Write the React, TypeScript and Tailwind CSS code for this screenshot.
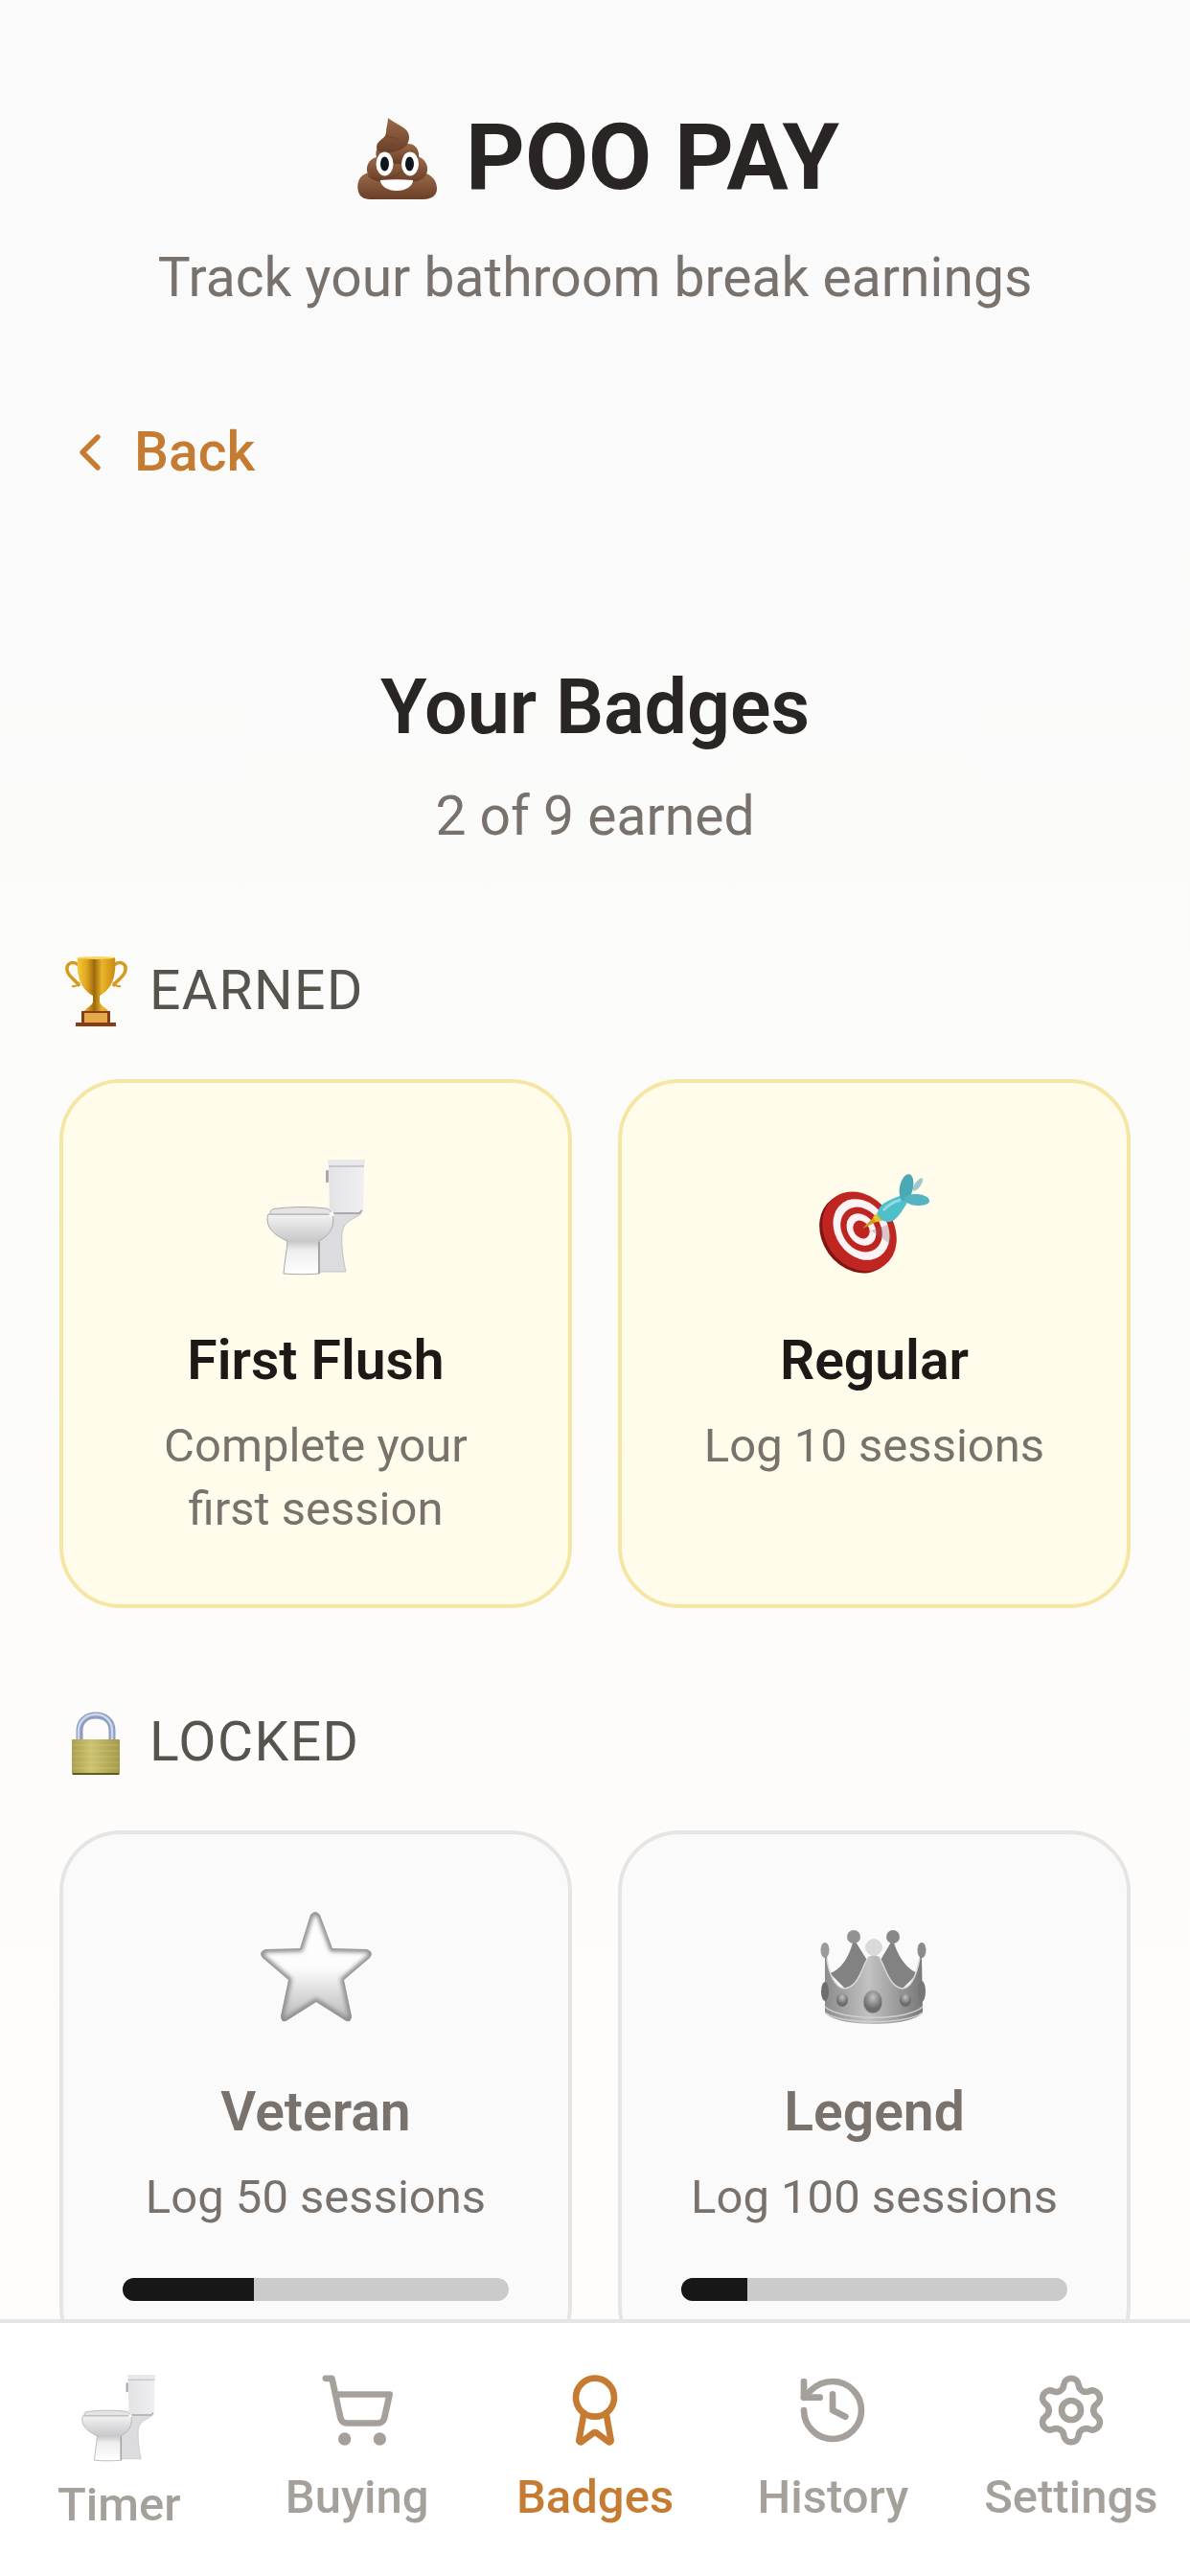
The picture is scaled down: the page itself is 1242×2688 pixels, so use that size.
import React from 'react';
import { Award, ChevronLeft, History, Settings, ShoppingCart } from 'lucide-react';

interface Badge {
  id: string;
  name: string;
  description: string;
  icon: React.ReactNode;
  progress?: number;
}

interface IconProps {
  className?: string;
}

const PooIcon = ({ className }: IconProps) => (
  <svg viewBox="0 0 96 96" className={className} aria-hidden="true">
    <defs>
      <linearGradient id="poo-a" x1="0" y1="0" x2="0" y2="1">
        <stop offset="0" stopColor="#9a6a49" />
        <stop offset="1" stopColor="#6a3f28" />
      </linearGradient>
    </defs>
    <path d="M20 64C8 66 6 76 8 84c2 7 8 8 14 8h54c8 0 14-4 14-11 0-9-6-15-14-17z" fill="url(#poo-a)" />
    <path d="M27 48c-9 2-12 11-9 18 3 7 12 8 20 8h24c10 0 17-4 18-12 1-7-4-13-10-15z" fill="url(#poo-a)" />
    <path d="M35 33c-7 2-10 9-8 15 3 7 12 8 20 7 9 0 22 0 24-7 1-8-4-14-11-14z" fill="url(#poo-a)" />
    <path d="M39 7c0 6-2 9-2 16 0 5-9 7-10 14 0 6 6 7 14 6 10-1 20-5 20-16C61 17 49 15 39 7z" fill="url(#poo-a)" />
    <path d="M37 23c-1 6 8 3 12 6M27 50c12 6 30 3 37-9M18 68c12 6 28 3 40-9" fill="none" stroke="#61391f" strokeOpacity=".45" strokeWidth="1.5" />
    <ellipse cx="35.5" cy="55" rx="9" ry="12.5" fill="#fff" />
    <ellipse cx="62" cy="55" rx="9" ry="12.5" fill="#fff" />
    <ellipse cx="35.5" cy="55" rx="4.5" ry="7.5" fill="#10151b" />
    <ellipse cx="61.5" cy="55" rx="4.5" ry="7.5" fill="#10151b" />
    <path d="M31 72c11-1 23-1 34 0 0 6-7 11-17 11s-17-5-17-11z" fill="#fff" />
  </svg>
);

const TrophyIcon = ({ className }: IconProps) => (
  <svg viewBox="0 0 76 76" className={className} aria-hidden="true">
    <defs>
      <linearGradient id="trophy-a">
        <stop offset="0" stopColor="#f6c93c" />
        <stop offset=".25" stopColor="#dea51f" />
        <stop offset=".45" stopColor="#9c6a0c" />
        <stop offset=".65" stopColor="#e9b52b" />
        <stop offset="1" stopColor="#c98a12" />
      </linearGradient>
    </defs>
    <path d="M20 11c-6-5-13-2-12 5 1 8 8 9 13 17M57 11c6-5 13-2 12 5-1 8-8 9-13 17" fill="none" stroke="#d59a20" strokeWidth="3.5" />
    <path d="M13 33c3 1 6-1 8-4M64 33c-3 1-6-1-8-4" fill="none" stroke="#d59a20" strokeWidth="2" />
    <path d="M19 3h39c2 20-4 34-16 40v6c0 4 5 5 9 10H26c4-5 9-6 9-10v-6C23 37 17 23 19 3z" fill="url(#trophy-a)" />
    <ellipse cx="38.5" cy="3.5" rx="19.5" ry="1.5" fill="#f8d662" />
    <path d="M23 59h30v12h6v4H17v-4h6z" fill="#8a3b12" />
    <path d="M26 61h24v10H26z" fill="#e3a94a" />
  </svg>
);

const LockIcon = ({ className }: IconProps) => (
  <svg viewBox="0 0 76 76" className={className} aria-hidden="true">
    <defs>
      <linearGradient id="lock-a">
        <stop offset="0" stopColor="#a99f4e" />
        <stop offset=".4" stopColor="#ccc272" />
        <stop offset="1" stopColor="#a49a4b" />
      </linearGradient>
    </defs>
    <path d="M21 36V26c0-10 7-16 17-16s17 6 17 16v10" fill="none" stroke="#8d9dbd" strokeWidth="7" />
    <path d="M20 36V26c0-10 8-17 18-17s17 7 17 17v10" fill="none" stroke="#cbd8ef" strokeWidth="2.5" />
    <rect x="13" y="35" width="50" height="37" rx="1" fill="url(#lock-a)" />
    <path d="M13 41h50M13 47h50M13 53h50M13 59h50M13 65h50" stroke="#e0d98e" strokeOpacity=".3" />
    <path d="M14 70h48v2H14z" fill="#5f5a22" />
  </svg>
);

const ToiletIcon = ({ className }: IconProps) => (
  <svg viewBox="0 0 128 128" className={className} aria-hidden="true">
    <defs>
      <linearGradient id="toilet-a">
        <stop offset="0" stopColor="#e3e2e5" />
        <stop offset="1" stopColor="#efeef1" />
      </linearGradient>
      <linearGradient id="toilet-b" x1="0" y1="0" x2="0" y2="1">
        <stop offset="0" stopColor="#f3f3f4" />
        <stop offset=".45" stopColor="#c8c8ca" />
        <stop offset=".6" stopColor="#eeeeef" />
        <stop offset="1" stopColor="#fff" />
      </linearGradient>
    </defs>
    <path d="M78 60h33c-6 6-18 7-20 20-1 14 1 28 4 41H66V84z" fill="#dcdbde" stroke="#c4c3c6" />
    <path d="M77 11h37l-1 46-4 4H78z" fill="url(#toilet-a)" />
    <path d="M78 60h31l3-3" fill="none" stroke="#a9a8ac" strokeWidth="2" />
    <path d="M76 4h39l-1 7H77z" fill="#e9e8eb" />
    <path d="M77 11h37" stroke="#bfbec2" strokeWidth="1.5" />
    <rect x="74" y="15" width="3" height="13" rx="1" fill="#aaa9ad" />
    <path d="M14 61h67c3 13-3 22-14 28v34c-12 1-25 1-37 0 1-12 3-22 4-34C20 83 10 74 14 61z" fill="url(#toilet-b)" stroke="#a9a9ab" />
    <path d="M16 60c0-4 3-5 8-5 16-2 34-2 50 0 3 0 6 3 5 6H16z" fill="#e4e4e5" stroke="#acacae" />
    <circle cx="80" cy="61" r="2.5" fill="#f8f8f8" />
    <path d="M67 90v33" stroke="#98989b" strokeWidth="1.5" />
  </svg>
);

const TargetIcon = ({ className }: IconProps) => (
  <svg viewBox="0 0 128 128" className={className} aria-hidden="true">
    <g transform="translate(45 81) rotate(-35)">
      <ellipse rx="36" ry="44" fill="#7d1512" />
    </g>
    <g transform="translate(48 79) rotate(-35)">
      <ellipse rx="36" ry="44" fill="#bf2622" />
    </g>
    <g transform="translate(50 77) rotate(-35)">
      <ellipse rx="27" ry="34" fill="#fdf3f4" />
      <ellipse rx="20" ry="25" fill="#bd2521" />
      <ellipse rx="14" ry="18" fill="#fdf3f4" />
      <ellipse rx="8" ry="10" fill="#bd2521" />
    </g>
    <path d="M60 78l20 14c2-6 1-14-3-20z" fill="#8b5d66" fillOpacity=".3" />
    <path d="M51 76l15-15 4 6z" fill="#d59a1c" />
    <path d="M62 64l5-5 5 9-7 1z" fill="#e5c52f" />
    <ellipse cx="109" cy="30" rx="3" ry="8" transform="rotate(35 109 30)" fill="#9fc9cc" />
    <path d="M67 59c2-9 10-12 23-17l9 5c-6 10-12 21-20 22-6 0-13-4-12-10z" fill="#4fbfc9" />
    <path d="M73 57c5-6 11-9 18-11" fill="none" stroke="#8fdbe1" strokeWidth="3" />
    <ellipse cx="97" cy="33" rx="7" ry="14" transform="rotate(12 97 33)" fill="#4aa9b5" />
    <ellipse cx="108" cy="46" rx="13" ry="6" transform="rotate(5 108 46)" fill="#55b4bf" />
  </svg>
);

const StarIcon = ({ className }: IconProps) => (
  <svg viewBox="0 0 128 128" className={className} aria-hidden="true">
    <defs>
      <linearGradient id="star-a" x1="0" y1="0" x2="0" y2="1">
        <stop offset="0" stopColor="#fff" />
        <stop offset=".5" stopColor="#fcfcfc" />
        <stop offset=".85" stopColor="#c4c4c4" />
        <stop offset="1" stopColor="#adadad" />
      </linearGradient>
      <filter id="star-b">
        <feGaussianBlur stdDeviation="2" />
      </filter>
      <clipPath id="star-c">
        <path d="M58 8q5-6 10 0l13 35 36 1q8 3 3 9L93 76l8 38q-1 8-7 4L64 99l-30 19q-6 4-7-4l8-38L8 53q-5-6 3-9l36-1z" />
      </clipPath>
    </defs>
    <g clipPath="url(#star-c)">
      <path d="M0 0h128v128H0z" fill="url(#star-a)" />
      <path d="M58 8q5-6 10 0l13 35 36 1q8 3 3 9L93 76l8 38q-1 8-7 4L64 99l-30 19q-6 4-7-4l8-38L8 53q-5-6 3-9l36-1z" fill="none" stroke="#8f8f8f" strokeWidth="7" filter="url(#star-b)" />
    </g>
  </svg>
);

const CrownIcon = ({ className }: IconProps) => (
  <svg viewBox="0 0 128 128" className={className} aria-hidden="true">
    <defs>
      <linearGradient id="crown-a">
        <stop offset="0" stopColor="#8b8b8b" />
        <stop offset=".45" stopColor="#c2c2c2" />
        <stop offset="1" stopColor="#777" />
      </linearGradient>
      <radialGradient id="crown-b" cx=".5" cy=".3">
        <stop offset="0" stopColor="#c2c2c2" />
        <stop offset="1" stopColor="#6c6c6c" />
      </radialGradient>
    </defs>
    <path d="M42 33l15 24-20 32-20-20c14-4 22-22 25-36zM83 33L69 57l20 32 20-20C95 64 86 47 83 33z" fill="#828282" />
    <circle cx="42" cy="31" r="7" fill="#929292" />
    <circle cx="83" cy="31" r="7" fill="#888" />
    <ellipse cx="12" cy="45" rx="4.5" ry="8" fill="#9b9b9b" />
    <ellipse cx="113" cy="45" rx="4.5" ry="8" fill="#8a8a8a" />
    <circle cx="63" cy="42" r="9" fill="#dadada" />
    <path d="M12 52h2c2 17 9 32 19 33 14-2 17-21 24-33q6-3 12 0c7 12 10 31 24 33 10-1 15-16 18-33h2l1 58c-12 16-90 16-102 0z" fill="url(#crown-a)" />
    <path d="M14 54c2 16 9 31 19 31 14-2 17-21 24-32M69 53c7 12 10 30 24 32 10-1 15-16 18-32" fill="none" stroke="#d8d8d8" strokeWidth="1.5" />
    <path d="M12 104c16 15 86 15 102 0M12 110c16 13 86 13 102 0" fill="none" stroke="#cfcfcf" strokeWidth="1.5" />
    <ellipse cx="12" cy="88" rx="4" ry="10" fill="#6e6e6e" />
    <ellipse cx="113" cy="88" rx="4" ry="11" fill="#777" />
    <ellipse cx="30" cy="97" rx="6" ry="7" fill="url(#crown-b)" />
    <ellipse cx="96" cy="97" rx="6" ry="7" fill="url(#crown-b)" />
    <ellipse cx="62" cy="99" rx="10" ry="12" fill="url(#crown-b)" stroke="#a9a9a9" />
  </svg>
);

const earnedBadges: Badge[] = [
  {
    id: 'first-flush',
    name: 'First Flush',
    description: 'Complete your first session',
    icon: <ToiletIcon className="size-32" />,
  },
  {
    id: 'regular',
    name: 'Regular',
    description: 'Log 10 sessions',
    icon: <TargetIcon className="size-32" />,
  },
];

const lockedBadges: Badge[] = [
  {
    id: 'veteran',
    name: 'Veteran',
    description: 'Log 50 sessions',
    icon: <StarIcon className="size-32" />,
    progress: 34,
  },
  {
    id: 'legend',
    name: 'Legend',
    description: 'Log 100 sessions',
    icon: <CrownIcon className="size-32" />,
    progress: 17,
  },
];

const tabs = [
  { label: 'Timer', icon: <ToiletIcon className="size-24 -mb-2" /> },
  { label: 'Buying', icon: <ShoppingCart className="size-20" /> },
  { label: 'Badges', icon: <Award className="size-20" />, active: true },
  { label: 'History', icon: <History className="size-20" /> },
  { label: 'Settings', icon: <Settings className="size-20" /> },
];

const BadgeCard = ({ badge, locked }: { badge: Badge; locked?: boolean }) => (
  <li
    className={`flex flex-col items-center rounded-[64px] border-4 px-[62px] pt-[76px] pb-[66px] text-center ${
      locked ? 'border-stone-200 bg-[#fafafa]' : 'border-[#f5e6a3] bg-[#fffceb]'
    }`}
  >
    {badge.icon}
    <h3
      className={`mt-11 text-[57px] leading-[84px] font-semibold ${
        locked ? 'text-stone-500' : 'text-stone-900'
      }`}
    >
      {badge.name}
    </h3>
    <p className="mt-[14px] text-[49px] leading-[66px] text-stone-500">{badge.description}</p>
    {badge.progress !== undefined && (
      <div
        role="progressbar"
        aria-label={`${badge.name} progress`}
        aria-valuenow={badge.progress}
        aria-valuemin={0}
        aria-valuemax={100}
        className="mt-[51px] h-6 w-full overflow-hidden rounded-full bg-[#cbcbcb]"
      >
        <div className="h-full bg-[#171717]" style={{ width: `${badge.progress}%` }} />
      </div>
    )}
  </li>
);

const SectionTitle = ({ icon, children }: { icon: React.ReactNode; children: React.ReactNode }) => (
  <h2 className="flex items-center gap-[18px] text-[57px] leading-[84px] tracking-wide text-stone-600">
    {icon}
    {children}
  </h2>
);

export default function App() {
  return (
    <div className="flex h-screen flex-col bg-linear-to-b from-[#fafafa] to-[#fefdfb] font-['Roboto',sans-serif]">
      <div className="min-h-0 flex-1 overflow-y-auto px-[62px] pt-[108px] [scrollbar-width:none]">
        <header className="text-center">
          <h1 className="flex items-center justify-center gap-6 text-[96px] leading-[112px] font-bold text-stone-800">
            <PooIcon className="size-24" />
            POO PAY
          </h1>
          <p className="mt-7 text-[57px] leading-[84px] text-stone-500">
            Track your bathroom break earnings
          </p>
        </header>

        <button
          type="button"
          className="mt-[98px] flex items-center gap-[14px] text-[57px] leading-[84px] font-medium text-[#c57b32]"
        >
          <ChevronLeft className="size-16" />
          Back
        </button>

        <main>
          <div className="mt-[176px] text-center">
            <h2 className="text-[79px] leading-[96px] font-semibold text-stone-800">Your Badges</h2>
            <p className="mt-6 text-[57px] leading-[84px] text-stone-500">2 of 9 earned</p>
          </div>

          {/* Earned */}
          <section className="mt-[98px]">
            <SectionTitle icon={<TrophyIcon className="size-[76px]" />}>EARNED</SectionTitle>
            <ul className="mt-[50px] grid grid-cols-2 gap-12">
              {earnedBadges.map((badge) => (
                <BadgeCard key={badge.id} badge={badge} />
              ))}
            </ul>
          </section>

          {/* Locked */}
          <section className="mt-[98px]">
            <SectionTitle icon={<LockIcon className="size-[76px]" />}>LOCKED</SectionTitle>
            <ul className="mt-[50px] grid grid-cols-2 gap-12">
              {lockedBadges.map((badge) => (
                <BadgeCard key={badge.id} badge={badge} locked />
              ))}
            </ul>
          </section>
        </main>
      </div>

      <nav className="grid shrink-0 grid-cols-5 border-t-4 border-stone-200 bg-white pt-[51px] pb-[42px]">
        {tabs.map((tab) => (
          <a
            key={tab.label}
            href="#"
            aria-current={tab.active ? 'page' : undefined}
            className={`flex flex-col items-center gap-[19px] text-[49px] leading-[64px] font-medium ${
              tab.active ? 'text-[#c57b32]' : 'text-stone-400'
            }`}
          >
            {tab.icon}
            {tab.label}
          </a>
        ))}
      </nav>
    </div>
  );
}
